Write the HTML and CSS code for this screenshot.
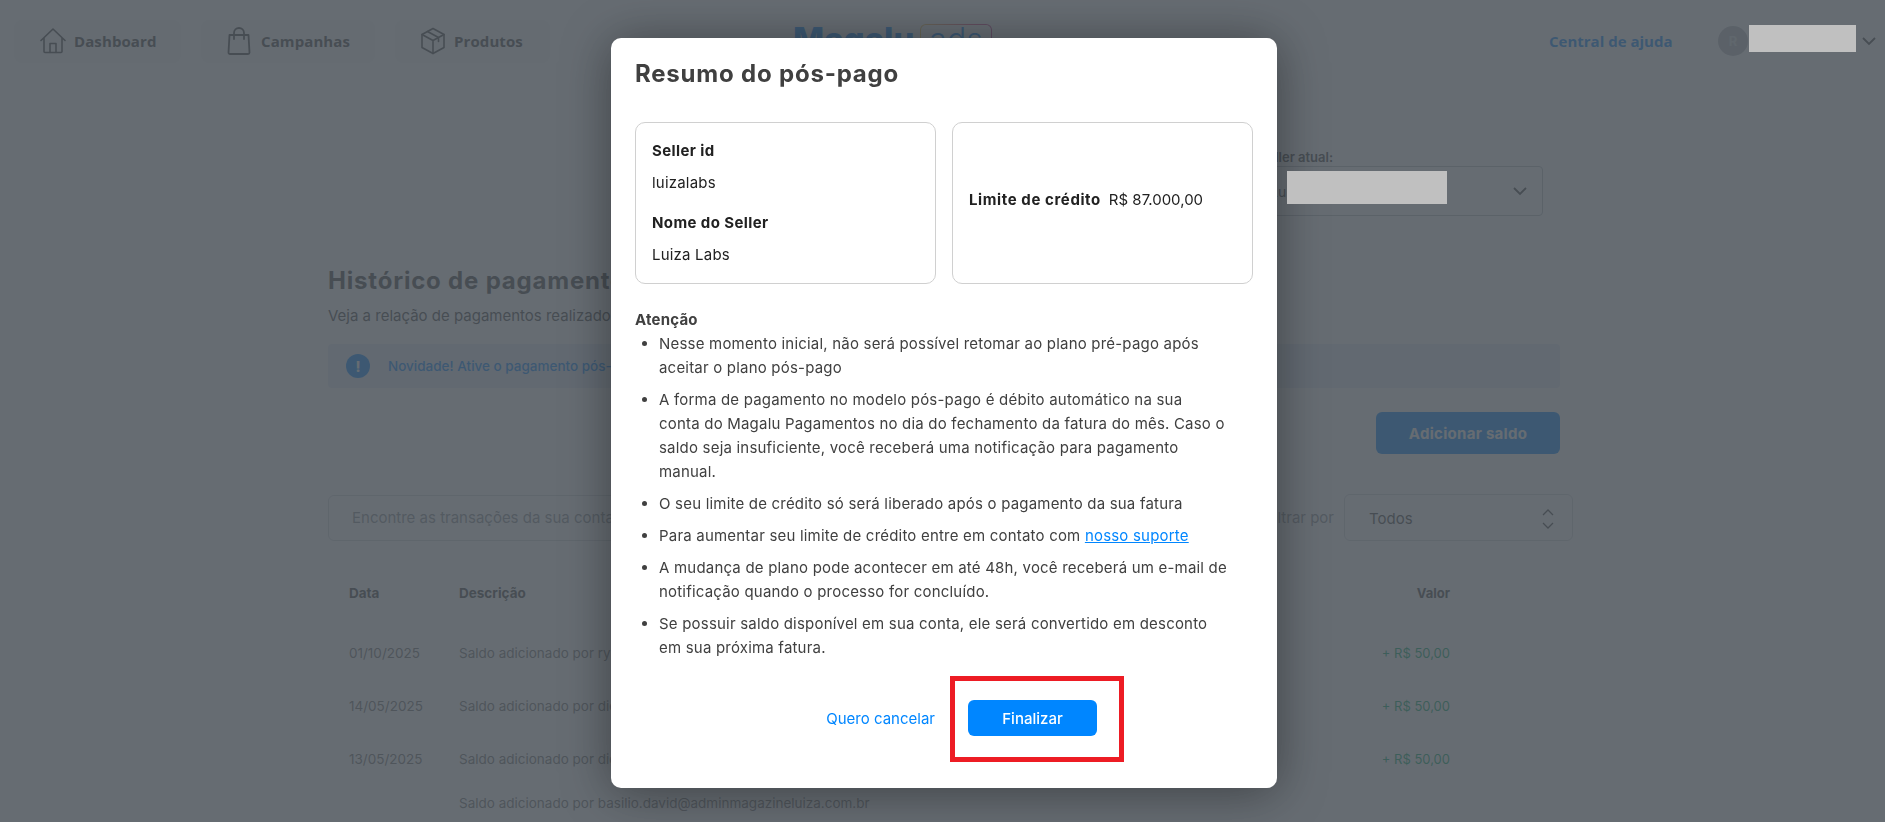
FILE: index.html
```html
<!DOCTYPE html>
<html lang="pt-BR">
<head>
<meta charset="utf-8">
<title>Resumo do pós-pago</title>
<link rel="stylesheet" href="styles.css">
</head>
<body>
<header class="topbar">
  <nav class="nav">
    <a class="nav-item nav-dashboard">
      <svg class="nav-icon" width="26" height="26" viewBox="0 0 26 26" fill="none" stroke="#404040" stroke-width="1.6" stroke-linejoin="round" stroke-linecap="round"><path d="M1 12.500 13 1l12 11.500M4 10v13.500a1 1 0 0 0 1 1h16a1 1 0 0 0 1-1V10"/><path d="M10 24.500V15.500h6v9"/></svg>
      <span>Dashboard</span>
    </a>
    <a class="nav-item nav-campaigns">
      <svg class="nav-icon" width="24" height="28" viewBox="0 0 24 28" fill="none" stroke="#404040" stroke-width="1.800" stroke-linejoin="round" stroke-linecap="round"><path d="M2.500 8h19l1 17.500a1.500 1.500 0 0 1-1.500 1.500H3a1.500 1.500 0 0 1-1.500-1.500z"/><path d="M7 12V6a5 5 0 0 1 10 0v6"/></svg>
      <span>Campanhas</span>
    </a>
    <a class="nav-item nav-products">
      <svg class="nav-icon" width="24" height="28" viewBox="0 0 24 28" fill="none" stroke="#404040" stroke-width="1.600" stroke-linejoin="round" stroke-linecap="round"><path d="M12 1.500 23 7.500v13L12 26.500 1 20.500v-13z"/><path d="M1 7.500 12 13.500 23 7.500M12 13.500v13M6.500 4.500 17.500 10.500v4"/></svg>
      <span>Produtos</span>
    </a>
  </nav>
  <div class="logo">
    <span class="logo-name">Magalu</span>
    <span class="logo-ads">ads</span>
  </div>
  <div class="account">
    <a class="help">Central de ajuda</a>
    <span class="avatar">R</span>
    <span class="redacted redacted-user"></span>
    <svg class="chevron" width="14" height="9" viewBox="0 0 14 9" fill="none" stroke="#404040" stroke-width="1.800"><path d="m1 1 6 6 6-6"/></svg>
  </div>
</header>

<main class="content">
  <section class="seller">
    <div class="seller-field">
      <div class="seller-label">Seller atual:</div>
      <div class="seller-select">
        <span class="seller-value">Lu</span>
        <span class="redacted redacted-seller"></span>
        <svg width="14" height="9" viewBox="0 0 14 9" fill="none" stroke="#404040" stroke-width="1.800"><path d="m1 1 6 6 6-6"/></svg>
      </div>
    </div>
  </section>

  <h1 class="page-title">Histórico de pagamentos</h1>
  <p class="page-sub">Veja a relação de pagamentos realizados em sua conta</p>

  <div class="alert">
    <span class="alert-icon">!</span>
    <span class="alert-text">Novidade! Ative o pagamento pós-pago para a sua conta</span>
  </div>

  <div class="actions"><button class="add-balance">Adicionar saldo</button></div>

  <div class="filters">
    <div class="search">Encontre as transações da sua conta</div>
    <span class="filter-label">Filtrar por</span>
    <div class="filter-select">
      <span>Todos</span>
      <svg width="12" height="20" viewBox="0 0 12 20" fill="none" stroke="#404040" stroke-width="1.300"><path d="m1 6 5-5 5 5M1 14l5 5 5-5"/></svg>
    </div>
  </div>

  <div class="table">
    <div class="row row-head"><span class="col-date">Data</span><span class="col-desc">Descrição</span><span class="col-value">Valor</span></div>
    <div class="row"><span class="col-date">01/10/2025</span><span class="col-desc">Saldo adicionado por ryan.silva@adminmagazineluiza.com.br</span><span class="col-value">+ R$ 50,00</span></div>
    <div class="row"><span class="col-date">14/05/2025</span><span class="col-desc">Saldo adicionado por diego.souza@adminmagazineluiza.com.br</span><span class="col-value">+ R$ 50,00</span></div>
    <div class="row"><span class="col-date">13/05/2025</span><span class="col-desc">Saldo adicionado por diego.souza@adminmagazineluiza.com.br</span><span class="col-value">+ R$ 50,00</span></div>
    <div class="row row-last"><span class="col-date"></span><span class="col-desc">Saldo adicionado por basilio.david@adminmagazineluiza.com.br</span><span class="col-value"></span></div>
  </div>
</main>

<div class="overlay"></div>

<div class="modal" role="dialog">
  <h2 class="modal-title">Resumo do pós-pago</h2>
  <div class="cards">
    <div class="card card-seller">
      <h3>Seller id</h3>
      <p>luizalabs</p>
      <h3>Nome do Seller</h3>
      <p>Luiza Labs</p>
    </div>
    <div class="card card-limit">
      <strong>Limite de crédito</strong>
      <span>R$ 87.000,00</span>
    </div>
  </div>
  <h4 class="notice-title">Atenção</h4>
  <ul class="notice-list">
    <li>Nesse momento inicial, não será possível retomar ao plano pré-pago após aceitar o plano pós-pago</li>
    <li>A forma de pagamento no modelo pós-pago é débito automático na sua conta do Magalu Pagamentos no dia do fechamento da fatura do mês. Caso o saldo seja insuficiente, você receberá uma notificação para pagamento manual.</li>
    <li>O seu limite de crédito só será liberado após o pagamento da sua fatura</li>
    <li>Para aumentar seu limite de crédito entre em contato com <a class="support-link">nosso suporte</a></li>
    <li>A mudança de plano pode acontecer em até 48h, você receberá um e-mail de notificação quando o processo for concluído.</li>
    <li>Se possuir saldo disponível em sua conta, ele será convertido em desconto em sua próxima fatura.</li>
  </ul>
  <div class="modal-footer">
    <a class="cancel">Quero cancelar</a>
    <div class="finish-wrap">
      <button class="finish">Finalizar</button>
      <span class="highlight"></span>
    </div>
  </div>
</div>
</body>
</html>
```

FILE: styles.css
```css
* { box-sizing: border-box; }

html, body {
  margin: 0;
  height: 822px;
  overflow: hidden;
  background: #fff;
}

body {
  position: relative;
  font-family: Inter, "Open Sans", sans-serif;
  color: #404040;
}

/* top bar */
.topbar {
  display: flex;
  align-items: flex-start;
  height: 100px;
  padding: 20px 9px 0 14px;
}

.nav { display: flex; gap: 20px; }

.nav-item {
  display: flex;
  align-items: center;
  height: 43px;
  padding-bottom: 1px;
  border-radius: 8px;
  background: #f4f5f6;
  font-family: "Open Sans", sans-serif;
  font-size: 15px;
  font-weight: 700;
  letter-spacing: 0.1px;
}

.nav-dashboard { width: 167px; padding-left: 26px; gap: 8px; }
.nav-campaigns { width: 174px; padding-left: 26px; gap: 10px; }
.nav-products { width: 155px; padding-left: 26px; gap: 9px; }

.nav-icon { flex: none; }

.logo {
  display: flex;
  align-items: flex-start;
  margin: 4px 0 0 243px;
  color: #0086ff;
}

.logo-name {
  width: 127px;
  margin-top: -5px;
  font-family: Inter, sans-serif;
  font-size: 33px;
  line-height: 40px;
  font-weight: 800;
}

.logo-ads {
  width: 72px;
  height: 44px;
  border: 1.500px solid transparent;
  border-radius: 6px;
  background:
    linear-gradient(#fff, #fff) padding-box,
    linear-gradient(90deg, #f2c94c, #e0447a 70%, #c2338f) border-box;
  text-align: center;
  font-family: Inter, sans-serif;
  font-size: 32px;
  line-height: 30px;
  font-weight: 300;
}

.account {
  display: flex;
  align-items: center;
  height: 42px;
  margin-left: auto;
}

.help {
  width: 169px;
  font-family: "Open Sans", sans-serif;
  font-size: 15px;
  font-weight: 700;
  color: #0086ff;
}

.avatar {
  display: flex;
  align-items: center;
  justify-content: center;
  width: 30px;
  height: 30px;
  border-radius: 50%;
  background: #b9bcc1;
  color: #dadcde;
  font-size: 13px;
  font-weight: 700;
}

.redacted {
  display: block;
  position: relative;
  z-index: 3;
  background: #c0c0c0;
}

.redacted-user { width: 107px; height: 27px; margin: -5px 6px 0 1px; }
.chevron { flex: none; }

/* page */
.content { width: 1232px; margin-left: 328px; }

.seller { display: flex; justify-content: flex-end; height: 146px; padding-right: 17px; margin-top: 48px; }
.seller-field { width: 300px; }
.seller-label { padding-left: 16px; font-size: 13px; font-weight: 600; line-height: 18px; }

.seller-select {
  display: flex;
  align-items: center;
  justify-content: space-between;
  height: 50px;
  padding: 0 15px 0 26px;
  border: 1px solid #b8bdc3;
  border-radius: 4px;
}

.seller-value { flex: none; width: 17px; font-size: 14px; white-space: nowrap; }
.redacted-seller { width: 160px; height: 33px; margin-right: auto; margin-top: -8px; }

.page-title {
  margin: -29px 0 0;
  font-family: Inter, sans-serif;
  font-size: 24px;
  line-height: 32px;
  font-weight: 700;
  letter-spacing: 0.8px;
}

.page-sub { margin: 9px 0 0; font-size: 15px; line-height: 20px; }

.alert {
  display: flex;
  align-items: center;
  gap: 18px;
  height: 44px;
  margin-top: 18px;
  padding-left: 18px;
  border-radius: 4px;
  background: #e4ebf7;
}

.alert-icon {
  display: flex;
  align-items: center;
  justify-content: center;
  width: 24px;
  height: 24px;
  border-radius: 50%;
  background: #0086ff;
  color: #fff;
  font-size: 14px;
  font-weight: 800;
}

.alert-text { font-size: 13.500px; font-weight: 500; color: #0086ff; }

.actions { display: flex; justify-content: flex-end; margin-top: 24px; }

.add-balance {
  width: 184px;
  height: 42px;
  border: 0;
  border-radius: 6px;
  background: #0086ff;
  color: #fff;
  font-family: Inter, sans-serif;
  font-size: 15px;
  font-weight: 700;
  letter-spacing: 0.3px;
}

.filters {
  display: flex;
  align-items: center;
  width: 1245px;
  height: 47px;
  margin-top: 40px;
}

.search {
  display: flex;
  align-items: center;
  flex: 1;
  height: 46px;
  padding-left: 23px;
  border: 1px solid #d4d7da;
  border-radius: 6px;
  font-size: 15px;
  color: #8a8f95;
}

.filter-label { margin: 0 10px 0 14px; font-size: 15px; color: #8a8f95; }

.filter-select {
  display: flex;
  align-items: center;
  justify-content: space-between;
  width: 229px;
  height: 47px;
  padding: 2px 18px 0 24px;
  border: 1px solid #d4d7da;
  border-radius: 6px;
  font-size: 15px;
}

.table { margin-top: 19px; }

.row {
  display: flex;
  align-items: center;
  height: 53px;
  padding-left: 21px;
  font-size: 13.500px;
  color: #707070;
}

.row-head { height: 66px; font-weight: 700; color: #404040; }
.row-last { height: 36px; }

.col-date { width: 110px; }
.col-desc { flex: 1; }
.col-value { width: 200px; margin-right: 110px; text-align: right; font-size: 13px; color: #00a868; }
.row-head .col-value { color: #404040; }

/* overlay and dialog */
.overlay {
  position: fixed;
  inset: 0;
  background: rgba(73, 80, 87, 0.84);
}

.modal {
  position: fixed;
  top: 38px;
  left: 611px;
  width: 666px;
  height: 750px;
  padding: 18px 24px 0;
  border-radius: 10px;
  background: #fff;
  box-shadow: 0 4px 50px rgba(0, 0, 0, 0.4);
  font-family: Inter, sans-serif;
  font-size: 15px;
}

.modal-title {
  margin: 0;
  font-size: 24px;
  line-height: 36px;
  font-weight: 700;
  letter-spacing: 0.8px;
}

.cards { display: flex; gap: 16px; margin-top: 30px; }

.card {
  width: 301px;
  height: 162px;
  padding: 0 16px;
  border: 1px solid #d0d0d0;
  border-radius: 10px;
  color: #212121;
}

.card h3 { margin: 0; font-size: 15px; line-height: 24px; font-weight: 700; letter-spacing: 0.4px; }
.card p { margin: 8px 0 16px; line-height: 24px; letter-spacing: 0.2px; }
.card-seller { padding-top: 16px; }

.card-limit { display: flex; align-items: center; gap: 8px; padding-bottom: 8px; }
.card-limit strong { letter-spacing: 0.6px; }

.notice-title {
  margin: 24px 0 0;
  font-size: 15px;
  line-height: 24px;
  font-weight: 700;
  letter-spacing: 0.2px;
}

.notice-list {
  width: 592px;
  margin: 0;
  padding: 0 0 0 24px;
  line-height: 24px;
  letter-spacing: 0.2px;
}

.notice-list li { margin-bottom: 8px; }

.support-link { color: #0086ff; text-decoration: underline; }

.modal-footer {
  display: flex;
  align-items: center;
  justify-content: flex-end;
  margin-top: 40px;
  padding-right: 156px;
  gap: 33px;
}

.cancel { color: #0086ff; font-size: 15px; }

.finish-wrap { position: relative; }

.finish {
  display: block;
  width: 129px;
  height: 36px;
  border: 0;
  border-radius: 6px;
  background: #0086ff;
  color: #fff;
  font-family: Inter, sans-serif;
  font-size: 15px;
  font-weight: 500;
}

.highlight {
  position: absolute;
  top: -24px;
  left: -18px;
  width: 174px;
  height: 86px;
  border: 5px solid #ed1c24;
  pointer-events: none;
}
```
